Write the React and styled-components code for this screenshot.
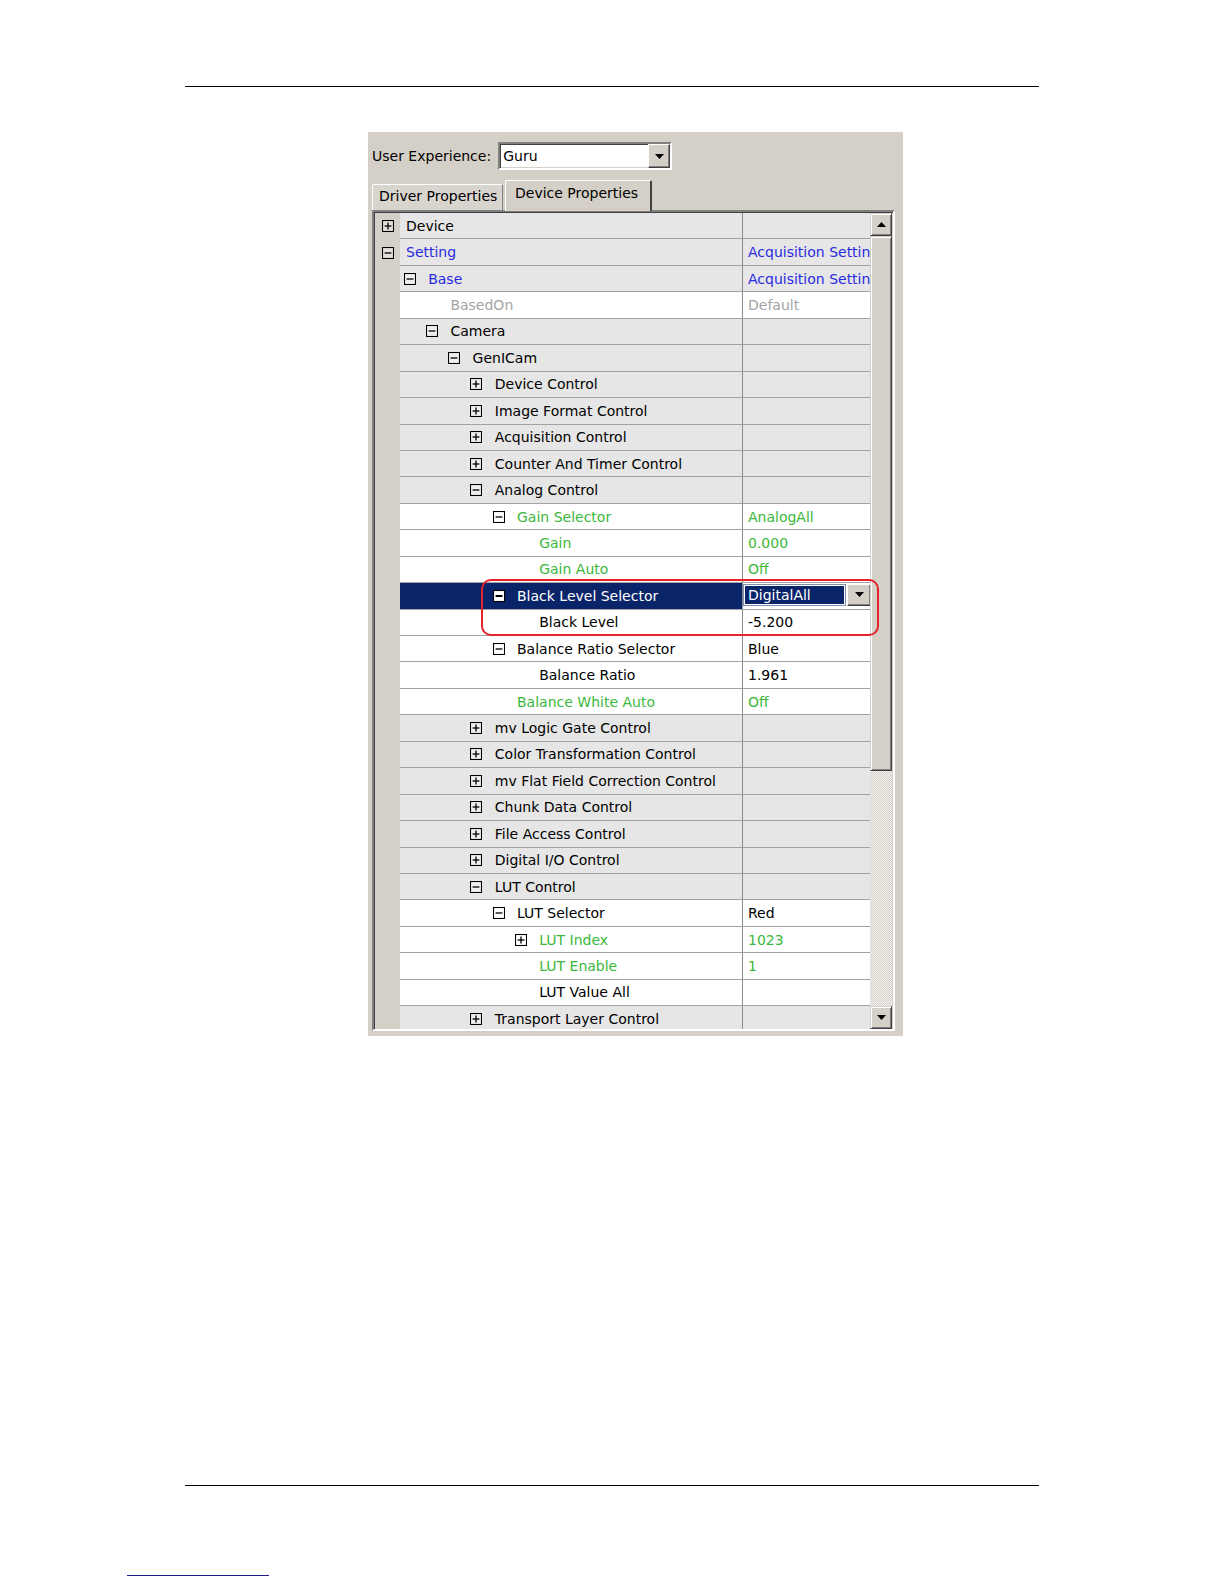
import React from 'react';
import styled, { createGlobalStyle } from 'styled-components';

const Global = createGlobalStyle`
  html, body { margin: 0; padding: 0; background: #fff; }
  body { font-family: "DejaVu Sans", "Liberation Sans", sans-serif; }
  * { box-sizing: border-box; }
`;

const FACE = '#d4d0c8';
const ROW_H = 26.45;

const Page = styled.div`
  width: 1224px;
  height: 1584px;
  background: #fff;
  display: flex;
  flex-direction: column;
  overflow: hidden;
`;

const Rule = styled.div`
  margin: ${p => p.$top}px 0 0 185px;
  width: 854px;
  height: 1px;
  background: #000;
`;

const LinkLine = styled.div`
  margin: 89px 0 0 127px;
  width: 142px;
  height: 1px;
  background: #1c1c8c;
`;

const Panel = styled.div`
  margin: 45px 0 0 368px;
  width: 535px;
  height: 904px;
  background: ${FACE};
  padding: 0 8px 0 4px;
  display: flex;
  flex-direction: column;
  font-size: 14px;
  color: #000;
`;

const Toolbar = styled.div`
  margin-top: 10px;
  height: 28px;
  display: flex;
  align-items: center;
  gap: 7px;
`;

const Label = styled.span`
  white-space: nowrap;
`;

const Combo = styled.div`
  width: 174px;
  height: 28px;
  background: #fff;
  border: 2px solid;
  border-color: #808080 #fff #fff #808080;
  box-shadow: inset 1px 1px 0 #404040, inset -1px -1px 0 ${FACE};
  display: flex;
  align-items: center;
  padding-left: 3px;
`;

const ComboText = styled.span`
  flex: 1;
`;

const DropButton = styled.div`
  width: ${p => p.$w}px;
  height: ${p => p.$h}px;
  background: ${FACE};
  border: 1px solid;
  border-color: #fff #404040 #404040 #fff;
  box-shadow: inset -1px -1px 0 #808080;
  display: flex;
  align-items: center;
  justify-content: center;
  flex: none;
`;

const TabRow = styled.div`
  margin-top: 9px;
  height: 31px;
  display: flex;
  align-items: flex-end;
  gap: 2px;
`;

const Tab = styled.div`
  height: ${p => (p.$active ? 31 : 26)}px;
  width: ${p => (p.$active ? 147 : 131)}px;
  background: ${p => (p.$active ? FACE : '#d8d5ce')};
  border-top: 1px solid #fff;
  border-left: 1px solid #fff;
  border-right: ${p => (p.$active ? '2px solid #404040' : '1px solid #808080')};
  border-top-left-radius: 2px;
  border-top-right-radius: 2px;
  padding-left: ${p => (p.$active ? 9 : 6)}px;
  padding-bottom: ${p => (p.$active ? 7 : 3)}px;
  display: flex;
  align-items: center;
  white-space: nowrap;
  position: relative;
  z-index: ${p => (p.$active ? 2 : 1)};
  margin-bottom: ${p => (p.$active ? -1 : 0)}px;
`;

const GridFrame = styled.div`
  width: 523px;
  height: 821px;
  border: 2px solid;
  border-color: #808080 #fff #fff #808080;
  box-shadow: inset 1px 1px 0 #404040, inset -1px -1px 0 ${FACE};
  padding: 1px 1px 0 1px;
  background: ${FACE};
`;

const GridContent = styled.div`
  position: relative;
  height: 100%;
  display: flex;
`;

const RowsArea = styled.div`
  width: 497px;
  height: 100%;
  overflow: hidden;
  display: flex;
  flex-direction: column;
`;

const Row = styled.div`
  flex: none;
  height: ${ROW_H}px;
  display: flex;
`;

const Gutter = styled.div`
  width: 25px;
  flex: none;
  background: ${FACE};
  display: flex;
  align-items: center;
  padding-left: 7px;
`;

const NameCell = styled.div`
  width: 343px;
  flex: none;
  display: flex;
  align-items: center;
  background: ${p => (p.$selected ? '#0a246a' : p.$white ? '#fff' : '#e6e6e6')};
  border-bottom: 1px solid #a2a2a2;
  border-right: 1px solid #8a8a8a;
  padding-left: ${p => (p.$level === 0 ? 6 : 3.7 + 22.2 * (p.$level - 1))}px;
  white-space: nowrap;
  overflow: hidden;
`;

const ExpanderSlot = styled.span`
  width: 12px;
  height: 12px;
  flex: none;
  margin-right: 12.5px;
  display: flex;
`;

const NameText = styled.span`
  color: ${p => p.$color};
`;

const ValueCell = styled.div`
  flex: 1;
  min-width: 0;
  display: flex;
  align-items: center;
  background: ${p => (p.$white ? '#fff' : '#e6e6e6')};
  border-bottom: 1px solid #a2a2a2;
  padding-left: ${p => (p.$combo ? 1 : 5)}px;
  white-space: nowrap;
  overflow: hidden;
  color: ${p => p.$color};
`;

const InlineCombo = styled.div`
  width: 127px;
  height: 22px;
  margin-top: -2px;
  display: flex;
  align-items: center;
  gap: 2px;
`;

const SelectedText = styled.div`
  width: 101px;
  height: 20px;
  background: #0a246a;
  color: #fff;
  border: 1px solid #fff;
  outline: 1px solid #7f8db0;
  display: flex;
  align-items: center;
  padding-left: 3px;
`;

const Scrollbar = styled.div`
  width: 22px;
  height: 100%;
  display: flex;
  flex-direction: column;
  background-color: #f2f1ee;
  background-image: repeating-conic-gradient(${FACE} 0 25%, #f4f3f0 0 50%);
  background-size: 2px 2px;
`;

const ScrollButton = styled.div`
  height: 23px;
  flex: none;
  background: ${FACE};
  border: 1px solid;
  border-color: ${FACE} #404040 #404040 ${FACE};
  box-shadow: inset 1px 1px 0 #fff, inset -1px -1px 0 #808080;
  display: flex;
  align-items: center;
  justify-content: center;
`;

const Thumb = styled.div`
  height: 535px;
  flex: none;
  background: ${FACE};
  border: 1px solid;
  border-color: ${FACE} #404040 #404040 ${FACE};
  box-shadow: inset 1px 1px 0 #fff, inset -1px -1px 0 #808080;
`;

const Track = styled.div`
  flex: 1;
`;

const Highlight = styled.div`
  position: absolute;
  left: 106px;
  top: 366px;
  width: 398px;
  height: 57px;
  border: 2px solid #e4232a;
  border-radius: 10px;
  pointer-events: none;
`;

const COLORS = {
  black: '#000',
  blue: '#2a2ae2',
  green: '#3bb83b',
  grey: '#a4a4a4',
};

const rows = [
  { n: 'Device', l: 0, b: 'plus' },
  { n: 'Setting', l: 0, b: 'minus', c: 'blue', v: 'Acquisition Setting' },
  { n: 'Base', l: 1, b: 'minus', c: 'blue', v: 'Acquisition Setting' },
  { n: 'BasedOn', l: 2, c: 'grey', v: 'Default', w: true },
  { n: 'Camera', l: 2, b: 'minus' },
  { n: 'GenICam', l: 3, b: 'minus' },
  { n: 'Device Control', l: 4, b: 'plus' },
  { n: 'Image Format Control', l: 4, b: 'plus' },
  { n: 'Acquisition Control', l: 4, b: 'plus' },
  { n: 'Counter And Timer Control', l: 4, b: 'plus' },
  { n: 'Analog Control', l: 4, b: 'minus' },
  { n: 'Gain Selector', l: 5, b: 'minus', c: 'green', v: 'AnalogAll', w: true },
  { n: 'Gain', l: 6, c: 'green', v: '0.000', w: true },
  { n: 'Gain Auto', l: 6, c: 'green', v: 'Off', w: true },
  { n: 'Black Level Selector', l: 5, b: 'minus', sel: true, v: 'DigitalAll', w: true },
  { n: 'Black Level', l: 6, v: '-5.200', w: true },
  { n: 'Balance Ratio Selector', l: 5, b: 'minus', v: 'Blue', w: true },
  { n: 'Balance Ratio', l: 6, v: '1.961', w: true },
  { n: 'Balance White Auto', l: 5, c: 'green', v: 'Off', w: true },
  { n: 'mv Logic Gate Control', l: 4, b: 'plus' },
  { n: 'Color Transformation Control', l: 4, b: 'plus' },
  { n: 'mv Flat Field Correction Control', l: 4, b: 'plus' },
  { n: 'Chunk Data Control', l: 4, b: 'plus' },
  { n: 'File Access Control', l: 4, b: 'plus' },
  { n: 'Digital I/O Control', l: 4, b: 'plus' },
  { n: 'LUT Control', l: 4, b: 'minus' },
  { n: 'LUT Selector', l: 5, b: 'minus', v: 'Red', w: true },
  { n: 'LUT Index', l: 6, b: 'plus', c: 'green', v: '1023', w: true },
  { n: 'LUT Enable', l: 6, c: 'green', v: '1', w: true },
  { n: 'LUT Value All', l: 6, w: true },
  { n: 'Transport Layer Control', l: 4, b: 'plus' },
];

const Expander = ({ type, inverted }) => (
  <svg width="12" height="12" viewBox="0 0 12 12">
    <rect x="0.5" y="0.5" width="11" height="11" fill={inverted ? '#fff' : 'rgba(255,255,255,0.35)'} stroke="#000" strokeWidth="1.1" />
    <line x1="2.6" y1="6" x2="9.4" y2="6" stroke="#000" strokeWidth={inverted ? 2 : 1.3} />
    {type === 'plus' && <line x1="6" y1="2.6" x2="6" y2="9.4" stroke="#000" strokeWidth="1.3" />}
  </svg>
);

const Arrow = ({ dir }) => (
  <svg width="9" height="5" viewBox="0 0 9 5">
    {dir === 'up' ? <polygon points="0,5 9,5 4.5,0" fill="#000" /> : <polygon points="0,0 9,0 4.5,5" fill="#000" />}
  </svg>
);

export default function App() {
  return (
    <>
      <Global />
      <Page>
        <Rule $top={86} />
        <Panel>
          <Toolbar>
            <Label>User Experience:</Label>
            <Combo>
              <ComboText>Guru</ComboText>
              <DropButton $w={22} $h={24}>
                <Arrow dir="down" />
              </DropButton>
            </Combo>
          </Toolbar>
          <TabRow>
            <Tab>Driver Properties</Tab>
            <Tab $active>Device Properties</Tab>
          </TabRow>
          <GridFrame>
            <GridContent>
              <RowsArea>
                {rows.map((r, i) => {
                  const color = r.sel ? '#fff' : COLORS[r.c || 'black'];
                  const box = r.b ? <Expander type={r.b} inverted={r.sel} /> : null;
                  return (
                    <Row key={i}>
                      <Gutter>{r.l === 0 && box}</Gutter>
                      <NameCell $level={r.l} $white={r.w} $selected={r.sel}>
                        {r.l > 0 && <ExpanderSlot>{box}</ExpanderSlot>}
                        <NameText $color={color}>{r.n}</NameText>
                      </NameCell>
                      <ValueCell $white={r.w} $color={COLORS[r.c || 'black']} $combo={r.sel}>
                        {r.sel ? (
                          <InlineCombo>
                            <SelectedText>{r.v}</SelectedText>
                            <DropButton $w={24} $h={22}>
                              <Arrow dir="down" />
                            </DropButton>
                          </InlineCombo>
                        ) : (
                          r.v
                        )}
                      </ValueCell>
                    </Row>
                  );
                })}
              </RowsArea>
              <Scrollbar>
                <ScrollButton>
                  <Arrow dir="up" />
                </ScrollButton>
                <Thumb />
                <Track />
                <ScrollButton>
                  <Arrow dir="down" />
                </ScrollButton>
              </Scrollbar>
              <Highlight />
            </GridContent>
          </GridFrame>
        </Panel>
        <Rule $top={449} />
        <LinkLine />
      </Page>
    </>
  );
}
